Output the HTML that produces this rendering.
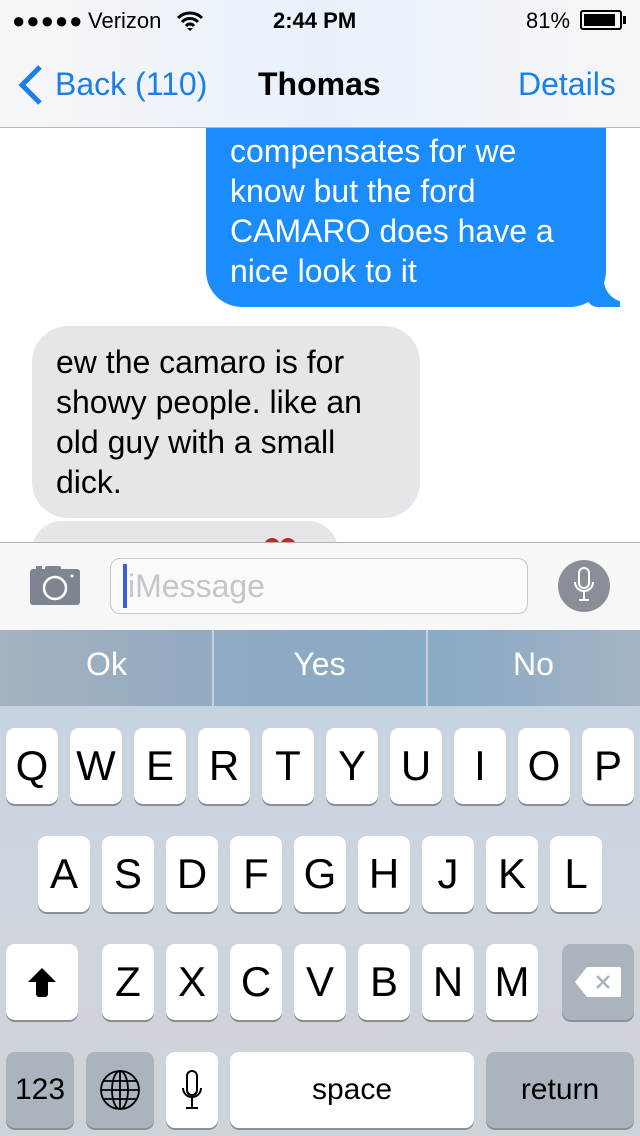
<!DOCTYPE html>
<html><head><meta charset="utf-8"><style>
*{margin:0;padding:0;box-sizing:border-box}
body{width:640px;height:1136px;position:relative;overflow:hidden;background:#fff;font-family:"Liberation Sans",sans-serif}
.abs{position:absolute}
.key{position:absolute;background:#fff;border-radius:9px;box-shadow:0 2px 0 #8a8f96;font-size:42px;color:#000;display:flex;align-items:center;justify-content:center;height:76px;width:52px}
.dk{background:#abb4be}
.msg{position:absolute;font-size:32px;line-height:40px}
</style></head><body>
<!-- messages -->
<div class="abs" style="left:586px;top:270px;width:34px;height:37px;background:#1a8cfb;border-radius:0 0 0 12px"></div>
<div class="abs" style="left:604px;top:250px;width:36px;height:52px;background:#fff;border-radius:0 0 0 22px"></div>
<div class="abs" style="left:206px;top:100px;width:400px;height:207px;background:#1a8cfb;border-radius:0 0 36px 36px"></div>
<div class="msg" style="left:230px;top:131px;color:#fff">compensates for we<br>know but the ford<br>CAMARO does have a<br>nice look to it</div>
<div class="abs" style="left:32px;top:326px;width:388px;height:192px;background:#e5e5ea;border-radius:36px"></div>
<div class="msg" style="left:56px;top:342px;color:#000">ew the camaro is for<br>showy people. like an<br>old guy with a small<br>dick.</div>
<div class="abs" style="left:32px;top:521px;width:306px;height:60px;background:#e5e5ea;border-radius:36px"></div>
<div class="abs" style="left:264px;top:538px;width:16px;height:16px;background:#b5301f;border-radius:50%"></div>
<div class="abs" style="left:280px;top:538px;width:16px;height:16px;background:#b5301f;border-radius:50%"></div>
<!-- header -->
<div class="abs" style="left:0;top:0;width:640px;height:128px;background:linear-gradient(90deg,#f6f6f8,#e8f1fa 50%,#f6f6f8);border-bottom:1px solid #b7b7b9"></div>
<div class="abs" style="left:12px;top:8px;font-size:22px;letter-spacing:1px">●●●●●</div>
<div class="abs" style="left:88px;top:8px;font-size:22px">Verizon</div>
<svg class="abs" style="left:176px;top:10px" width="28" height="22" viewBox="0 0 28 22"><path d="M2 8a17 17 0 0 1 24 0M6 12a11 11 0 0 1 16 0M10 16a5 5 0 0 1 8 0" stroke="#000" stroke-width="3" fill="none"/><path d="M11 18l3 3 3-3z" fill="#000"/></svg>
<div class="abs" style="left:273px;top:8px;font-size:22px;font-weight:bold">2:44 PM</div>
<div class="abs" style="left:526px;top:8px;font-size:22px">81%</div>
<div class="abs" style="left:580px;top:10px;width:42px;height:20px;border:2px solid #000;border-radius:3px;padding:2px"><div style="width:31px;height:12px;background:#000"></div></div>
<div class="abs" style="left:623px;top:16px;width:3px;height:8px;background:#000"></div>
<svg class="abs" style="left:16px;top:64px" width="28" height="42"><path d="M24 3L6 21l18 18" stroke="#1a7fe6" stroke-width="5" fill="none"/></svg>
<div class="abs" style="left:55px;top:66px;font-size:32px;color:#1a7fe6">Back (110)</div>
<div class="abs" style="left:258px;top:66px;font-size:32px;font-weight:bold">Thomas</div>
<div class="abs" style="left:518px;top:66px;font-size:32px;color:#1a7fe6">Details</div>
<!-- input bar -->
<div class="abs" style="left:0;top:542px;width:640px;height:88px;background:#f7f7f8;border-top:1px solid #b4b4b6"></div>
<svg class="abs" style="left:30px;top:566px" width="50" height="39"><rect x="0" y="3" width="50" height="36" rx="3" fill="#7f8590"/><rect x="15" y="0" width="16" height="6" rx="2" fill="#7f8590"/><rect x="6" y="0" width="6" height="3" fill="#7f8590"/><circle cx="25" cy="22" r="11" fill="none" stroke="#fff" stroke-width="2.5"/><circle cx="42" cy="10" r="1.5" fill="#fff"/></svg>
<div class="abs" style="left:110px;top:558px;width:418px;height:56px;background:#fafafb;border:1px solid #c7c7cc;border-radius:10px"></div>
<div class="abs" style="left:123px;top:564px;width:4px;height:44px;background:#3a5fe0"></div>
<div class="abs" style="left:128px;top:568px;font-size:32px;color:#c5c5ca">iMessage</div>
<div class="abs" style="left:558px;top:560px;width:52px;height:52px;border-radius:50%;background:#8a8e97"></div>
<svg class="abs" style="left:570px;top:566px" width="28" height="40"><rect x="9" y="2" width="10" height="20" rx="5" fill="none" stroke="#fff" stroke-width="2"/><path d="M5 16a9 9 0 0 0 18 0M14 25v9M9 34h10" stroke="#fff" stroke-width="2" fill="none"/></svg>
<!-- keyboard -->
<div class="abs" style="left:0;top:630px;width:640px;height:506px;background:linear-gradient(180deg,#bfd0e0 0,#c9d4df 25%,#d0d5dc 60%,#cfd3d8 100%)"></div>
<div class="abs" style="left:0;top:630px;width:640px;height:76px;background:linear-gradient(90deg,#a4b1bf,#8eaac3 40%,#8aabc6 70%,#a3b3c3)"></div>
<div class="abs" style="left:212px;top:630px;width:2px;height:76px;background:#c4d2de"></div>
<div class="abs" style="left:426px;top:630px;width:2px;height:76px;background:#c4d2de"></div>
<div class="abs" style="left:0;top:646px;width:213px;text-align:center;font-size:32px;color:#fff">Ok</div>
<div class="abs" style="left:213px;top:646px;width:213px;text-align:center;font-size:32px;color:#fff">Yes</div>
<div class="abs" style="left:427px;top:646px;width:213px;text-align:center;font-size:32px;color:#fff">No</div>

<div class="key" style="left:6px;top:728px">Q</div><div class="key" style="left:70px;top:728px">W</div><div class="key" style="left:134px;top:728px">E</div><div class="key" style="left:198px;top:728px">R</div><div class="key" style="left:262px;top:728px">T</div><div class="key" style="left:326px;top:728px">Y</div><div class="key" style="left:390px;top:728px">U</div><div class="key" style="left:454px;top:728px">I</div><div class="key" style="left:518px;top:728px">O</div><div class="key" style="left:582px;top:728px">P</div>
<div class="key" style="left:38px;top:836px">A</div><div class="key" style="left:102px;top:836px">S</div><div class="key" style="left:166px;top:836px">D</div><div class="key" style="left:230px;top:836px">F</div><div class="key" style="left:294px;top:836px">G</div><div class="key" style="left:358px;top:836px">H</div><div class="key" style="left:422px;top:836px">J</div><div class="key" style="left:486px;top:836px">K</div><div class="key" style="left:550px;top:836px">L</div>
<div class="key" style="left:6px;top:944px;width:72px"><svg width="32" height="32"><path d="M16 2L2 16h8v12a3 3 0 0 0 3 3h6a3 3 0 0 0 3-3V16h8z" fill="#000"/></svg></div>
<div class="key" style="left:102px;top:944px">Z</div><div class="key" style="left:166px;top:944px">X</div><div class="key" style="left:230px;top:944px">C</div><div class="key" style="left:294px;top:944px">V</div><div class="key" style="left:358px;top:944px">B</div><div class="key" style="left:422px;top:944px">N</div><div class="key" style="left:486px;top:944px">M</div>
<div class="key dk" style="left:562px;top:944px;width:72px"><svg width="46" height="30"><path d="M12 0h32a2 2 0 0 1 2 2v26a2 2 0 0 1-2 2H12L0 15z" fill="#fff"/><path d="M22 9l12 12M34 9L22 21" stroke="#aab3bd" stroke-width="2.5"/></svg></div>
<div class="key dk" style="left:6px;top:1052px;width:68px;font-size:30px">123</div>
<div class="key dk" style="left:86px;top:1052px;width:68px"><svg width="42" height="42" viewBox="0 0 42 42" fill="none" stroke="#000" stroke-width="1.8"><circle cx="21" cy="21" r="19"/><ellipse cx="21" cy="21" rx="8" ry="19"/><path d="M21 2v38M2 21h38M5 12h32M5 30h32"/></svg></div>
<div class="key" style="left:166px;top:1052px"><svg width="24" height="40"><rect x="7" y="1" width="10" height="24" rx="5" fill="none" stroke="#000" stroke-width="2"/><path d="M3 18a9 9 0 0 0 18 0M12 28v10M6 38h12" stroke="#000" stroke-width="2" fill="none"/></svg></div>
<div class="key" style="left:230px;top:1052px;width:244px;font-size:30px">space</div>
<div class="key dk" style="left:486px;top:1052px;width:148px;font-size:30px">return</div>
</body></html>
